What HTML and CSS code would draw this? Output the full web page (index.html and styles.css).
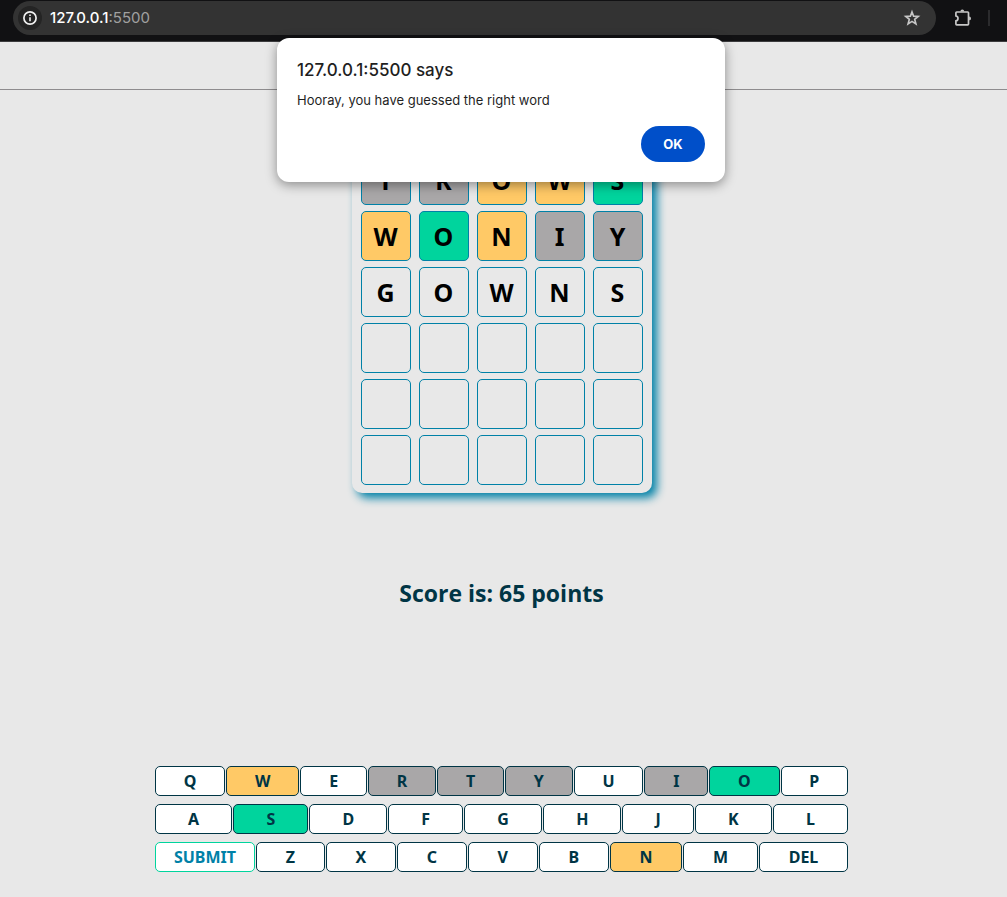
FILE: index.html
```html
<!DOCTYPE html>
<html lang="en">
<head>
<meta charset="utf-8">
<title>Word game</title>
<link rel="stylesheet" href="styles.css">
</head>
<body>
<div class="toolbar">
  <div class="address">
    <button class="site-info" aria-label="Site information">
      <svg width="16" height="16" viewBox="0 0 16 16" fill="none" stroke="#f0f0f0"><circle cx="8" cy="8" r="6.1" stroke-width="1.7"/><path d="M8 7.2v4M8 4.5v1.6" stroke-width="1.6"/></svg>
    </button>
    <span class="url"><span class="host">127.0.0.1</span>:5500</span>
    <button class="icon-button star" aria-label="Bookmark this page">
      <svg width="18" height="18" viewBox="0 0 18 18" fill="none" stroke="#c7c7c7" stroke-width="1.7"><path d="M9 3l1.600 4.200 4.600.3-3.500 2.900 1.200 4.500L9 12.400l-3.900 2.500 1.200-4.500L2.800 7.500l4.600-.3z"/></svg>
    </button>
  </div>
  <button class="icon-button" aria-label="Extensions">
    <svg width="20" height="20" viewBox="0 0 20 20" fill="none" stroke="#c7c7c7" stroke-width="1.700"><path d="M4.700 4h11q.8 0 .8.800v11.200q0 .8-.8.800h-11q-.8 0-.8-.8v-3.100c1.400-.3 2.100-1.200 2.100-2.500S5.300 8.200 3.900 7.900V4.800q0-.8.8-.8z"/><path d="M8.400 3.500a1.900 1.900 0 0 1 3.800 0zM17.100 8.500a1.900 1.900 0 0 1 0 3.800z" fill="#c7c7c7" stroke="none"/></svg>
  </button>
  <span class="divider"></span>
</div>
<header class="page-header"></header>
<main class="game">
  <section class="board" aria-label="Guesses">
    <div class="tile absent">T</div><div class="tile absent">R</div><div class="tile present">O</div><div class="tile present">W</div><div class="tile correct">S</div>
    <div class="tile present">W</div><div class="tile correct">O</div><div class="tile present">N</div><div class="tile absent">I</div><div class="tile absent">Y</div>
    <div class="tile">G</div><div class="tile">O</div><div class="tile">W</div><div class="tile">N</div><div class="tile">S</div>
    <div class="tile"></div><div class="tile"></div><div class="tile"></div><div class="tile"></div><div class="tile"></div>
    <div class="tile"></div><div class="tile"></div><div class="tile"></div><div class="tile"></div><div class="tile"></div>
    <div class="tile"></div><div class="tile"></div><div class="tile"></div><div class="tile"></div><div class="tile"></div>
  </section>
  <h2 class="score">Score is: 65 points</h2>
  <section class="keyboard" aria-label="Keyboard">
    <div class="key-row">
      <button class="key">Q</button><button class="key present">W</button><button class="key">E</button><button class="key absent">R</button><button class="key absent">T</button><button class="key absent">Y</button><button class="key">U</button><button class="key absent">I</button><button class="key correct">O</button><button class="key">P</button>
    </div>
    <div class="key-row">
      <button class="key">A</button><button class="key correct">S</button><button class="key">D</button><button class="key">F</button><button class="key">G</button><button class="key">H</button><button class="key">J</button><button class="key">K</button><button class="key">L</button>
    </div>
    <div class="key-row">
      <button class="key submit">SUBMIT</button><button class="key">Z</button><button class="key">X</button><button class="key">C</button><button class="key">V</button><button class="key">B</button><button class="key present">N</button><button class="key">M</button><button class="key">DEL</button>
    </div>
  </section>
</main>
<div class="dialog" role="alertdialog" aria-labelledby="dialog-title" aria-describedby="dialog-text">
  <h1 class="dialog-title" id="dialog-title">127.0.0.1:5500 says</h1>
  <p class="dialog-text" id="dialog-text">Hooray, you have guessed the right word</p>
  <button class="ok">OK</button>
</div>
</body>
</html>
```
FILE: styles.css
```css
* { box-sizing: border-box; }
body {
  margin: 0;
  min-height: 100vh;
  background: #e8e8e8;
  color: #003545;
  font-family: "Noto Sans", sans-serif;
}
button { font: inherit; cursor: pointer; }

.toolbar {
  display: flex;
  align-items: center;
  height: 42px;
  padding: 1px 17px 6px 13px;
  background: #111113;
  border-bottom: 1px solid #3c3c3e;
}
.address {
  flex: 1;
  display: flex;
  align-items: center;
  height: 34px;
  margin-right: 16px;
  padding: 0 15px 0 5px;
  border-radius: 17px;
  background: #333333;
  color: #a0a0a0;
  font: 15px/20px Inter, sans-serif;
}
.site-info {
  display: grid;
  place-items: center;
  width: 24px;
  height: 24px;
  margin-right: 8px;
  padding: 0;
  border: 0;
  border-radius: 50%;
  background: #242424;
}
.url { flex: 1; }
.host { color: #ffffff; font-weight: 500; }
.icon-button {
  display: flex;
  padding: 0;
  border: 0;
  background: none;
}
.divider {
  width: 2px;
  height: 16px;
  margin-left: 16px;
  background: #2b2b2d;
}

.page-header {
  height: 48px;
  border-bottom: 1px solid #8e8c8e;
}
.game {
  display: flex;
  flex-direction: column;
  align-items: center;
  padding: 57px 4px 25px 0;
}
.board {
  display: grid;
  grid-template-columns: repeat(5, 50px);
  grid-auto-rows: 50px;
  justify-content: center;
  gap: 6px 8px;
  width: 300px;
  padding: 8px 0;
  border-radius: 10px;
  background: #e8e8e8;
  box-shadow: 5px 5px 10px #0081a7;
}
.tile {
  display: grid;
  place-items: center;
  border: 1px solid #0081a7;
  border-radius: 5px;
  color: #000000;
  font-size: 25px;
  font-weight: 700;
  line-height: 34px;
}
.score {
  margin: 85px 0 157px;
  font-family: "Open Sans", "Noto Sans", sans-serif;
  font-size: 23px;
  font-weight: 700;
  line-height: 31px;
}
.keyboard {
  display: grid;
  gap: 8px;
  width: 100%;
  max-width: 693px;
}
.key-row { display: flex; gap: 1px; }
.key {
  flex: 1 1 auto;
  height: 30px;
  padding: 0 6px;
  border: 1px solid #003545;
  border-radius: 5px;
  background: #ffffff;
  color: #003545;
  font-size: 16px;
  font-weight: 700;
  line-height: 22px;
}
.submit { flex: 0 0 100px; border-color: #00d49d; color: #0081a7; }
.present { background: #ffc966; }
.correct { background: #00d49d; }
.absent { background: #a9a7a8; }

.dialog {
  position: absolute;
  top: 38px;
  left: 0;
  right: 5px;
  display: flex;
  flex-direction: column;
  max-width: 448px;
  margin: 0 auto;
  padding: 20px;
  border-radius: 12px;
  background: #ffffff;
  color: #1f1f1f;
  font-family: Inter, sans-serif;
  box-shadow: 0 3px 12px rgba(0, 0, 0, 0.4);
}
.dialog-title {
  margin: 0 0 8px;
  font-size: 17px;
  font-weight: 500;
  line-height: 24px;
}
.dialog-text {
  margin: 0 0 16px;
  font-size: 13px;
  line-height: 20px;
}
.ok {
  align-self: flex-end;
  width: 64px;
  height: 36px;
  border: 0;
  border-radius: 18px;
  background: #004fc9;
  color: #ffffff;
  font-size: 13px;
  font-weight: 700;
}
```
